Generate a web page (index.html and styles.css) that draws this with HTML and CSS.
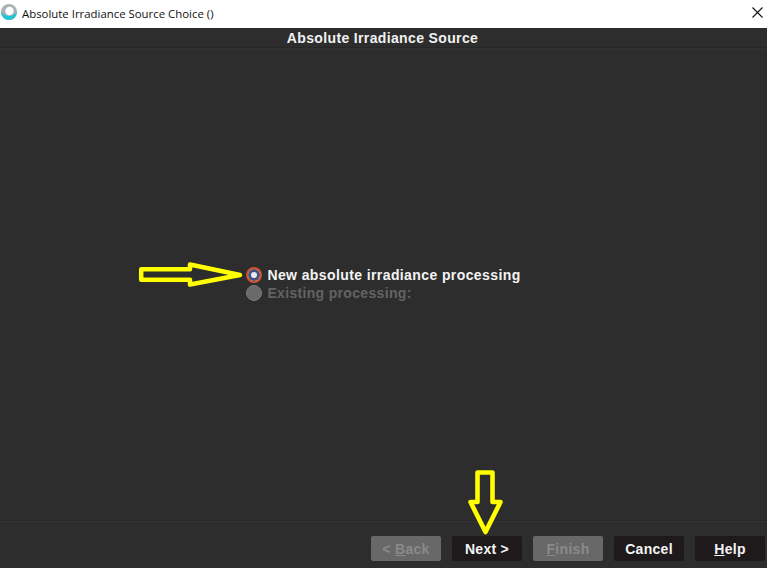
FILE: index.html
```html
<!DOCTYPE html>
<html lang="en">
  <head>
    <meta charset="UTF-8" />
    <title>Absolute Irradiance Source Choice ()</title>
    <link rel="stylesheet" href="styles.css">
  </head>
  <body>
    <div class="titlebar">
      <svg class="app-icon" width="18" height="18" viewBox="0 0 18 18">
        <circle cx="9" cy="9" r="8" fill="#a9b2b4" />
        <path d="M1 9 A8 8 0 0 0 17 9 Q13 13 9 13 Q5 13 1 9 Z" fill="#22c4d4" />
        <circle cx="9.5" cy="8" r="4.2" fill="#fff" />
      </svg>
      <span class="title-text">Absolute Irradiance Source Choice ()</span>
      <svg class="close-icon" width="11" height="11" viewBox="0 0 11 11">
        <path d="M0.5 0.5 L10.5 10.5 M10.5 0.5 L0.5 10.5" stroke="#111" stroke-width="1.1" fill="none" />
      </svg>
    </div>

    <div class="dialog">
      <div class="header">Absolute Irradiance Source</div>

      <div class="content">
        <div class="options">
          <div class="option">
            <span class="radio selected"></span>
            <span>New absolute irradiance processing</span>
          </div>
          <div class="option disabled">
            <span class="radio"></span>
            <span>Existing processing:</span>
          </div>
        </div>
      </div>

      <div class="footer">
        <button class="btn disabled">&lt; <u>B</u>ack</button>
        <button class="btn">Next &gt;</button>
        <button class="btn disabled"><u>F</u>inish</button>
        <button class="btn">Cancel</button>
        <button class="btn"><u>H</u>elp</button>
      </div>
    </div>

    <!-- yellow annotation arrows -->
    <svg class="arrow arrow-right" width="106" height="26" viewBox="0 0 106 26">
      <path d="M3.2 7.2 H52 V2.5 L102 13 L52 22.5 V17.8 H3.2 Z" fill="none" stroke="#ffff00" stroke-width="4.5" stroke-linejoin="round" />
    </svg>
    <svg class="arrow arrow-down" width="36" height="66" viewBox="0 0 36 66">
      <path d="M10.5 3.5 H25.5 V33 H33.5 L18.5 63 L3.5 33 H10.5 Z" fill="none" stroke="#ffff00" stroke-width="4.6" stroke-linejoin="round" />
    </svg>
  </body>
</html>
```

FILE: styles.css
```css
html,
body {
  margin: 0;
  height: 100%;
  overflow: hidden;
}
body {
  position: relative;
  display: flex;
  flex-direction: column;
  font-family: "Liberation Sans", Arial, sans-serif;
  background-color: #2d2d2d;
}
.titlebar {
  height: 28px;
  box-sizing: border-box;
  flex-shrink: 0;
  display: flex;
  align-items: center;
  background-color: #fff;
  padding: 0 0 2px 0;
}
.app-icon {
  margin: 0 4px 3px 0;
}
.title-text {
  font-family: "Open Sans", "Noto Sans", sans-serif;
  font-size: 11.4px;
  color: #111;
}
.close-icon {
  margin: 0 4px 2px auto;
}
.dialog {
  flex: 1;
  display: flex;
  flex-direction: column;
}
.header {
  height: 19px;
  line-height: 21px;
  text-align: center;
  font-size: 14px;
  font-weight: bold;
  letter-spacing: 0.36px;
  padding-right: 2px;
  color: #f2f2f2;
  border-bottom: 1px solid #272727;
  box-shadow: 0 1px 0 #313131;
}
.content {
  flex: 1;
  display: flex;
  align-items: center;
  justify-content: center;
  padding-bottom: 2px;
}
.options {
  display: flex;
  flex-direction: column;
  gap: 1px;
}
.option {
  height: 17px;
  display: flex;
  align-items: center;
  gap: 5px;
  font-size: 14px;
  font-weight: bold;
  letter-spacing: 0.4px;
  color: #f4f4f4;
}
.option.disabled {
  letter-spacing: 0.33px;
  color: #636363;
}
.radio {
  width: 16px;
  height: 16px;
  box-sizing: border-box;
  border-radius: 50%;
  background-color: #6a6a6a;
  border: 1px solid #7a7a7a;
}
.radio.selected {
  border: 2px solid #d0532c;
  background-color: #e8e8f8;
  box-shadow: inset 0 0 0 3px #44507f;
}
.footer {
  height: 47px;
  box-sizing: border-box;
  display: flex;
  justify-content: flex-end;
  gap: 11px;
  padding: 14px 2px 0 0;
  border-top: 1px solid #333;
  box-shadow: 0 -1px 0 #292929;
}
.btn {
  width: 70px;
  height: 25px;
  padding: 0;
  border: none;
  border-radius: 2px;
  font-family: inherit;
  font-size: 14px;
  font-weight: bold;
  letter-spacing: 0.3px;
  color: #f4f4f4;
  background-color: #1e1a1b;
}
.btn.disabled {
  color: #8a8a8a;
  background-color: #686868;
}
.arrow {
  position: absolute;
}
.arrow-right {
  left: 138px;
  top: 262px;
}
.arrow-down {
  left: 467px;
  top: 469px;
}
```
